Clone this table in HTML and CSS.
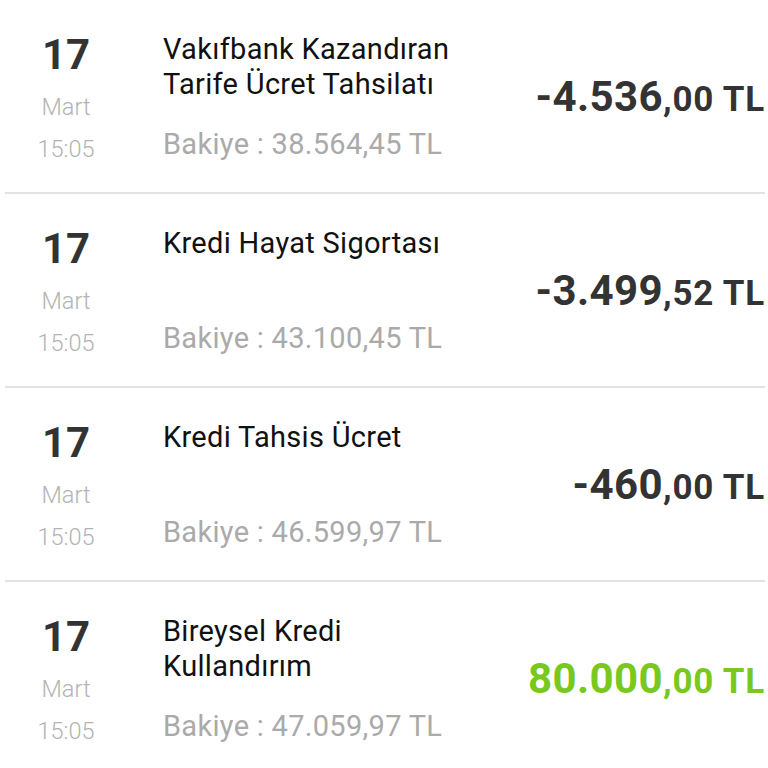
FILE: index.html
```html
<!DOCTYPE html>
<html lang="tr">
<head>
    <meta charset="utf-8" />
    <meta name="viewport" content="width=device-width, initial-scale=1" />
    <title>Hesap Hareketleri</title>
    <link rel="stylesheet" href="styles.css">
</head>
<body>

  <div class="lista">

    <div class="hareket">
      <div class="fecha">
        <div class="dia">17</div>
        <div class="mes">Mart</div>
        <div class="hora">15:05</div>
      </div>
      <div class="detalle">
        <div class="titulo">Vakıfbank Kazandıran Tarife Ücret Tahsilatı</div>
        <div class="bakiye">Bakiye : 38.564,45 TL</div>
      </div>
      <div class="monto">-4.536<span class="dec">,00 TL</span></div>
    </div>

    <div class="hareket">
      <div class="fecha">
        <div class="dia">17</div>
        <div class="mes">Mart</div>
        <div class="hora">15:05</div>
      </div>
      <div class="detalle">
        <div class="titulo">Kredi Hayat Sigortası</div>
        <div class="bakiye">Bakiye : 43.100,45 TL</div>
      </div>
      <div class="monto">-3.499<span class="dec">,52 TL</span></div>
    </div>

    <div class="hareket">
      <div class="fecha">
        <div class="dia">17</div>
        <div class="mes">Mart</div>
        <div class="hora">15:05</div>
      </div>
      <div class="detalle">
        <div class="titulo">Kredi Tahsis Ücret</div>
        <div class="bakiye">Bakiye : 46.599,97 TL</div>
      </div>
      <div class="monto">-460<span class="dec">,00 TL</span></div>
    </div>

    <div class="hareket">
      <div class="fecha">
        <div class="dia">17</div>
        <div class="mes">Mart</div>
        <div class="hora">15:05</div>
      </div>
      <div class="detalle">
        <div class="titulo">Bireysel Kredi Kullandırım</div>
        <div class="bakiye">Bakiye : 47.059,97 TL</div>
      </div>
      <div class="monto ingreso">80.000<span class="dec">,00 TL</span></div>
    </div>

  </div>

</body>
</html>
```

FILE: styles.css
```css
body {
    font-family: Roboto, "Noto Sans", sans-serif;
    background-color: #fff;
    margin: 0;
    overflow: hidden;
}
.lista { padding: 0 3px 0 5px; }
.hareket {
    display: flex;
    align-items: center;
    height: 192px;
    border-bottom: 2px solid #e2e2e2;
}
.fecha {
    width: 132px;
    margin-left: -5px;
    align-self: flex-start;
    padding-top: 32px;
    text-align: center;
    flex-shrink: 0;
}
.dia { font-size: 42px; font-weight: 700; color: #333; line-height: 46px; }
.mes, .hora { font-size: 23.5px; color: #b3b3b3; font-weight: 300; line-height: 42px; }
.mes { margin-top: 8px; }
.detalle {
    align-self: flex-start;
    padding-top: 32px;
    margin-left: 31px;
    width: 305px;
}
.titulo { font-size: 29px; color: #111; line-height: 35px; height: 94px; letter-spacing: 0.3px; }
.bakiye { font-size: 29px; color: #aaa; line-height: 36px; letter-spacing: 0.3px; }
.monto {
    margin-left: auto;
    font-size: 42px;
    font-weight: 700;
    color: #333;
    white-space: nowrap;
    letter-spacing: 0.4px;
}
.dec { font-size: 35px; letter-spacing: 0.8px; }
.ingreso { color: #78c81e; }
```
